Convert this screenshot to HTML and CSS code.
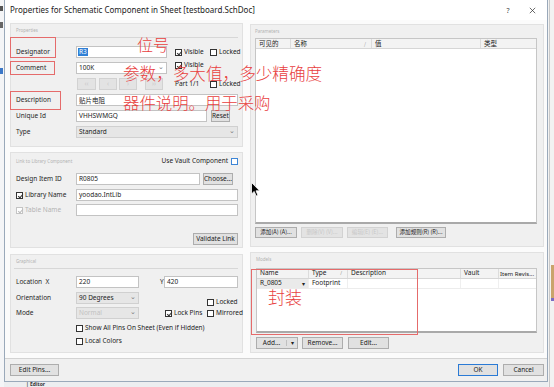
FILE: index.html
```html
<!DOCTYPE html>
<html>
<head>
<meta charset="utf-8">
<link rel="stylesheet" href="styles.css">
</head>
<body>
<div class="backdrop-left"><i class="bm bm1"></i><i class="bm bm2"></i><i class="bm bm3"></i></div>
<div class="backdrop-right"><i class="br-line"></i><i class="br-block"></i></div>
<div class="backdrop-bottom">| Editor</div>

<div class="dialog">
  <div class="titlebar">
    <span class="title">Properties for Schematic Component in Sheet [testboard.SchDoc]</span>
    <span class="tb-help">?</span>
    <svg class="tb-close" viewBox="0 0 10 10"><path d="M2 2L8 8M8 2L2 8" stroke="#333" stroke-width="0.8"/></svg>
  </div>

  <div class="body">
    <div class="col-left">
      <section class="panel props">
        <div class="panel-head sep">Properties</div>
        <div class="row r-first">
          <span class="lbl">Designator</span>
          <div class="field w91"><span class="sel">R3</span></div>
          <div class="cb-group ml8 w35"><span class="chk on"></span><span>Visible</span></div>
          <div class="cb-group"><span class="chk"></span><span>Locked</span></div>
        </div>
        <div class="row r-gap4">
          <span class="lbl">Comment</span>
          <div class="field w91 combo"><span>100K</span><span class="chev">&#8964;</span></div>
          <div class="cb-group ml8 w35 up"><span class="chk on"></span><span>Visible</span></div>
        </div>
        <div class="row r-gap4">
          <span class="lbl lbl61"></span>
          <span class="btn dis w19">&lsaquo;&lsaquo;</span>
          <span class="btn dis w18 ml3">&lsaquo;</span>
          <span class="btn dis w18 ml2">&rsaquo;</span>
          <span class="btn dis w18 ml8">&rsaquo;&rsaquo;</span>
          <span class="part">Part 1/1</span>
          <div class="cb-group"><span class="chk"></span><span>Locked</span></div>
        </div>
        <div class="row r-gap4">
          <span class="lbl">Description</span>
          <div class="field grow"><span class="cjk">贴片电阻</span></div>
        </div>
        <div class="row r-gap4">
          <span class="lbl">Unique Id</span>
          <div class="field w131"><span>VHHSWMGQ</span></div>
          <span class="btn grow ml4">Reset</span>
        </div>
        <div class="row r-gap4">
          <span class="lbl">Type</span>
          <div class="field grow combo gray"><span>Standard</span><span class="chev">&#8964;</span></div>
        </div>
      </section>

      <section class="panel link">
        <div class="panel-head link-head">
          <span>Link to Library Component</span>
          <span class="vault">Use Vault Component<span class="chk blue"></span></span>
        </div>
        <div class="row r-gap4">
          <span class="lbl">Design Item ID</span>
          <div class="field w124"><span>R0805</span></div>
          <span class="btn grow ml3">Choose...</span>
        </div>
        <div class="row r-gap4">
          <span class="lbl"><span class="chk on"></span>Library Name</span>
          <div class="field grow"><span>yoodao.IntLib</span></div>
        </div>
        <div class="row r-gap3">
          <span class="lbl faint"><span class="chk on dim"></span>Table Name</span>
          <div class="field grow"></div>
        </div>
        <div class="row r-gap17 end">
          <span class="btn w45">Validate Link</span>
        </div>
      </section>

      <section class="panel graph">
        <div class="panel-head sep">Graphical</div>
        <div class="row r-gap7">
          <span class="lbl">Location&nbsp;&nbsp;X</span>
          <div class="field w63"><span>220</span></div>
          <span class="ylbl">Y</span>
          <div class="field grow"><span>420</span></div>
        </div>
        <div class="row r-gap4">
          <span class="lbl">Orientation</span>
          <div class="field w63 combo gray"><span>90 Degrees</span><span class="chev">&#8964;</span></div>
          <div class="cb-group auto low w31"><span class="chk"></span><span>Locked</span></div>
        </div>
        <div class="row r-gap3">
          <span class="lbl">Mode</span>
          <div class="field w63 combo gray dis-f"><span>Normal</span><span class="chev">&#8964;</span></div>
          <div class="cb-group ml26"><span class="chk on"></span><span>Lock Pins</span></div>
          <div class="cb-group auto w31"><span class="chk"></span><span>Mirrored</span></div>
        </div>
        <div class="row r-gap5 short">
          <span class="lbl"></span>
          <div class="cb-group"><span class="chk"></span><span>Show All Pins On Sheet (Even if Hidden)</span></div>
        </div>
        <div class="row r-gap4 short">
          <span class="lbl"></span>
          <div class="cb-group"><span class="chk"></span><span>Local Colors</span></div>
        </div>
      </section>
    </div>

    <div class="col-right">
      <section class="panel params">
        <div class="panel-head">Parameters</div>
        <div class="table ptable">
          <div class="thead">
            <span class="th pw1 cjk">可见的</span>
            <span class="th pw2 cjk">名称<i class="sort">/</i></span>
            <span class="th pw3 cjk">值</span>
            <span class="th grow cjk">类型</span>
          </div>
        </div>
        <div class="btnrow">
          <span class="btn cjk small w42">添加(A) (A)...</span>
          <span class="btn cjk small dis w42 ml4">删除(V) (V)...</span>
          <span class="btn cjk small dis w41 ml4">编辑(E) (E)...</span>
          <span class="btn cjk small w50 ml8">添加规则(R) (R)...</span>
        </div>
      </section>

      <section class="panel models">
        <div class="panel-head mhead">Models</div>
        <div class="table mtable">
          <div class="thead">
            <span class="th mw1">Name</span>
            <span class="th mw2">Type<i class="sort">/</i></span>
            <span class="th mw3">Description</span>
            <span class="th mw4">Vault</span>
            <span class="th grow tight">Item Revis...</span>
          </div>
          <div class="trow">
            <span class="td mw1 namecell">R_0805<i class="ddbtn">&#9662;</i></span>
            <span class="td mw2">Footprint</span>
            <span class="td mw3"></span>
            <span class="td mw4"></span>
            <span class="td grow"></span>
          </div>
        </div>
        <div class="btnrow mbtns">
          <span class="btn split w42"><span class="sp-main">Add...</span><span class="sp-arrow">&#9662;</span></span>
          <span class="btn w41 ml4">Remove...</span>
          <span class="btn w41 ml5">Edit...</span>
        </div>
      </section>
    </div>
  </div>

  <div class="footer">
    <span class="btn fbtn w49">Edit Pins...</span>
    <span class="btn fbtn ok">OK</span>
    <span class="btn fbtn w41 ml5">Cancel</span>
  </div>

  <!-- annotations drawn over the dialog -->
  <div class="anno box b-desig"></div>
  <div class="anno box b-comment"></div>
  <div class="anno box b-desc"></div>
  <div class="anno box b-models"></div>
  <div class="anno txt t1">位号</div>
  <div class="anno txt t2">参数，多大值，多少精确度</div>
  <div class="anno txt t3">器件说明。用于采购</div>
  <div class="anno txt t4">封装</div>
  <svg class="cursor" viewBox="0 0 9 15"><path d="M0.5 0.5 L0.5 12 L3.2 9.4 L5.2 14 L6.9 13.2 L5 8.8 L8.6 8.8 Z" fill="#000" stroke="#fff" stroke-width="0.8"/></svg>
</div>
</body>
</html>
```

FILE: styles.css
```css
* { box-sizing: border-box; }
html, body { margin: 0; padding: 0; }
body {
  width: 554px; height: 387px; overflow: hidden; position: relative;
  background: #eceef0;
  font-family: "Noto Sans", "Noto Sans CJK SC", sans-serif;
  font-size: 6.5px; color: #222; line-height: 1;
}
.cjk { font-family: "Noto Sans CJK SC", "Noto Sans", sans-serif; }

/* backdrop of the application behind the dialog */
.backdrop-left { position: absolute; left: 0; top: 0; width: 4px; height: 387px; background: #f4f5f7; }
.bm { position: absolute; left: 0; width: 3px; display: block; }
.bm1 { top: 6px; height: 5px; background: #555; }
.bm2 { top: 22px; height: 6px; background: #666; }
.bm3 { top: 68px; height: 6px; background: #3c78c8; }
.backdrop-right { position: absolute; left: 548px; top: 0; width: 6px; height: 387px; background: #f2f2f2; }
.br-line { position: absolute; left: 1px; top: 0; width: 1px; height: 387px; background: #c9c9c9; display: block; }
.br-block { position: absolute; left: 3px; top: 265px; width: 3px; height: 36px; background: #c9a46c; border-bottom: 3px solid #7a6bc4; display: block; }
.backdrop-bottom { position: absolute; left: 26px; top: 382px; font-size: 5px; line-height: 5px; font-weight: bold; color: #333; }

/* dialog */
.dialog {
  position: relative; margin-left: 4px; width: 544px; height: 382px;
  border: 1px solid #9aa9ba; border-top: 0;
  background: #fbfbfb; display: flex; flex-direction: column;
}
.titlebar { height: 20px; flex: none; display: flex; align-items: center; background: #fff; padding-left: 5px; }
.title { flex: 1; font-size: 8px; color: #1b1b1b; }
.tb-help { width: 8px; margin-right: 16px; font-size: 7px; color: #444; text-align: center; }
.tb-close { width: 9px; height: 9px; margin-right: 10px; }

.body { flex: 1; display: flex; gap: 7px; padding: 3px 3px 0 5px; }
.col-left { width: 233px; display: flex; flex-direction: column; }
.col-right { width: 294px; display: flex; flex-direction: column; padding-top: 1px; }

.panel { background: #f0f0f0; border: 1px solid #e1e1e1; display: flex; flex-direction: column; padding: 0 4px 0 5px; }
.props { height: 124px; }
.link { height: 96px; margin-top: 5px; }
.graph { height: 99px; margin-top: 6px; }
.params { height: 223px; padding: 0 6px 0 4px; }
.models { height: 101px; margin-top: 5px; padding: 0 6px 0 5px; }

.panel-head { height: 13px; flex: none; font-size: 4.5px; color: #b3b3b3; padding-top: 4px; }
.panel-head.sep { border-bottom: 1px solid #d7d7d7; height: 14px; margin-left: -2px; padding-left: 2px; }
.link-head { height: 16px; display: flex; align-items: center; justify-content: space-between; padding-top: 0; }
.vault { display: flex; align-items: center; font-size: 6.5px; color: #222; }
.mhead { height: 15px; }

.row { display: flex; align-items: center; height: 12px; flex: none; }
.row.short { height: 9px; }
.r-first { margin-top: 8px; }
.r-gap3 { margin-top: 3px; }
.r-gap4 { margin-top: 4px; }
.r-gap5 { margin-top: 5px; }
.r-gap7 { margin-top: 7px; }
.r-gap17 { margin-top: 17px; }
.row.end { justify-content: flex-end; }

.lbl { width: 60px; flex: none; display: flex; align-items: center; color: #262626; white-space: nowrap; }
.lbl .chk { margin-right: 2px; }
.lbl.faint { color: #b4b4b4; }
.lbl61 { width: 61px; }

.field {
  height: 12px; background: #fff; border: 1px solid #c3c3c3;
  display: flex; align-items: center; padding: 0 2px; color: #222; flex: none;
}
.field.grow, .grow { flex: 1; }
.field.combo { justify-content: space-between; }
.field.gray { background: #e6e6e6; border-color: #d0d0d0; }
.field.dis-f { color: #c2c2c2; }
.chev { color: #777; font-size: 7px; line-height: 1; margin-top: -4px; }
.sel { background: #2f7fd6; color: #fff; padding: 1px 1px; margin-left: -1px; }

.w18 { width: 18px; } .w19 { width: 19px; } .w31 { width: 31px; } .w35 { width: 35px; } .w41 { width: 41px; }
.w42 { width: 42px; } .w45 { width: 45px; } .w49 { width: 49px; } .w50 { width: 50px; }
.w63 { width: 63px; } .w91 { width: 91px; } .w124 { width: 124px; } .w131 { width: 131px; }
.ml2 { margin-left: 2px; } .ml3 { margin-left: 3px; } .ml4 { margin-left: 4px; }
.ml5 { margin-left: 5px; } .ml8 { margin-left: 8px; } .ml26 { margin-left: 26px; }
.auto { margin-left: auto; }

.cb-group { display: flex; align-items: center; flex: none; white-space: nowrap; }
.cb-group .chk { margin-right: 2px; }
.cb-group.up { align-self: flex-start; }
.cb-group.low { align-self: flex-end; margin-bottom: -2px; }
.part { margin-left: 12px; width: 35px; flex: none; }

.chk { width: 7px; height: 7px; border: 1px solid #333; background: #fff; flex: none; display: inline-block; position: relative; }
.chk.on::after {
  content: ""; position: absolute; left: 1.5px; top: 0; width: 2px; height: 4px;
  border: solid #333; border-width: 0 1px 1px 0; transform: rotate(40deg);
}
.chk.dim { border-color: #c4c4c4; }
.chk.dim::after { border-color: #bcbcbc; }
.chk.blue { border-color: #3e86d6; margin-left: 3px; }

.btn {
  height: 12px; background: #e1e1e1; border: 1px solid #adadad;
  display: inline-flex; align-items: center; justify-content: center;
  color: #222; flex: none; white-space: nowrap;
}
.btn.dis { background: #e3e3e3; border-color: #d2d2d2; color: #c8c8c8; }
.btn.small { font-size: 5.6px; height: 11px; }
.ylbl { margin-left: 21px; width: 4px; }

/* tables */
.table { background: #fff; border: 1px solid #c6c6c6; border-bottom: 2px solid #a9a9a9; flex: none; }
.ptable { height: 186px; }
.mtable { height: 65px; }
.thead { display: flex; height: 10px; background: #f3f3f3; border-bottom: 1px solid #d6d6d6; }
.th { display: flex; align-items: center; padding-left: 3px; border-right: 1px solid #dcdcdc; color: #222; position: relative; flex: none; white-space: nowrap; overflow: hidden; }
.th.grow { flex: 1; border-right: 0; }
.th.tight { padding-left: 1px; font-size: 6px; }
.sort { position: absolute; right: 5px; font-style: normal; color: #999; font-size: 5px; }
.pw1 { width: 35px; } .pw2 { width: 81px; } .pw3 { width: 109px; }
.mw1 { width: 52px; } .mw2 { width: 39px; } .mw3 { width: 113px; } .mw4 { width: 38px; }
.trow { display: flex; height: 10px; border-bottom: 1px solid #ececec; }
.td { display: flex; align-items: center; padding-left: 3px; border-right: 1px solid #efefef; flex: none; white-space: nowrap; }
.td.grow { flex: 1; border-right: 0; }
.namecell { background: #eaeaea; justify-content: space-between; padding-right: 1px; }
.ddbtn { font-style: normal; font-size: 6px; color: #222; width: 7px; text-align: center; }

.btnrow { display: flex; margin-top: 3px; height: 11px; }
.mbtns { margin-top: 4px; height: 12px; }
.split { padding: 0; }
.sp-main { flex: 1; text-align: center; border-right: 1px solid #c0c0c0; }
.sp-arrow { width: 10px; text-align: center; font-size: 6px; }

/* footer */
.footer { height: 23px; flex: none; display: flex; align-items: center; border-top: 1px solid #d3d3d3; background: #f0f0f0; padding: 0 3px 0 5px; }
.footer .ok { margin-left: auto; width: 40px; border-color: #2a7ad5; }

/* annotations */
.anno { position: absolute; }
.box { border: 1px solid #e56b6b; }
.b-desig { left: 5px; top: 37px; width: 46px; height: 21px; }
.b-comment { left: 5px; top: 61px; width: 45px; height: 14px; }
.b-desc { left: 5px; top: 91px; width: 51px; height: 19px; }
.b-models { left: 246px; top: 269px; width: 167px; height: 66px; }
.txt { font-family: "Noto Sans CJK SC", sans-serif; color: #e8403e; font-weight: 300; line-height: 1; white-space: nowrap; }
.t1 { left: 132px; top: 36px; font-size: 16px; }
.t2 { left: 118px; top: 65px; font-size: 16.6px; }
.t3 { left: 118px; top: 94px; font-size: 16.4px; }
.t4 { left: 263px; top: 288px; font-size: 17px; }
.cursor { position: absolute; left: 246px; top: 182px; width: 9px; height: 15px; }
```
